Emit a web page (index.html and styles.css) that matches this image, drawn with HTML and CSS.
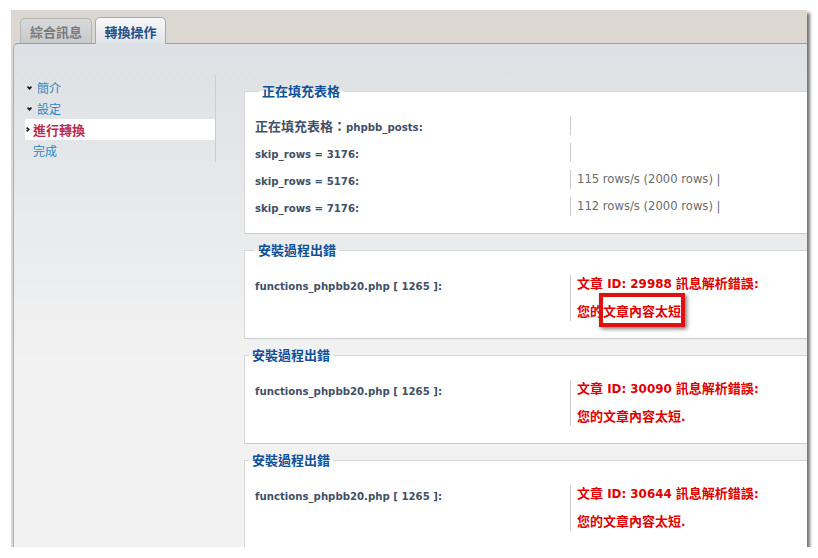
FILE: index.html
```html
<!DOCTYPE html>
<html lang="zh-Hant">

<head>
    <meta charset="UTF-8">
    <meta name="viewport" content="width=device-width, initial-scale=1.0">
    <title>轉換操作</title>
    <link rel="stylesheet" href="styles.css">
</head>

<body>
    <div class="window">
        <div class="tabs">
            <div class="tab">綜合訊息</div>
            <div class="tab tab_active">轉換操作</div>
        </div>

        <div class="panel">
            <!-- left menu -->
            <ul class="menu">
                <li><a href="#"><svg class="bullet" width="5" height="4" viewBox="0 0 5 4"><polyline points="0.6,0.6 2.5,2.8 4.4,0.6" /></svg>簡介</a></li>
                <li><a href="#"><svg class="bullet" width="5" height="4" viewBox="0 0 5 4"><polyline points="0.6,0.6 2.5,2.8 4.4,0.6" /></svg>設定</a></li>
                <li class="menu_active"><a href="#"><svg class="bullet" width="4" height="5" viewBox="0 0 4 5"><polyline points="0.6,0.6 2.8,2.5 0.6,4.4" /></svg>進行轉換</a></li>
                <li class="menu_plain"><a href="#">完成</a></li>
            </ul>

            <div class="main">
                <fieldset>
                    <legend class="legend_fill">正在填充表格</legend>
                    <dl>
                        <dt><span class="zh">正在填充表格：</span>phpbb_posts:</dt>
                        <dd></dd>
                    </dl>
                    <dl>
                        <dt>skip_rows = 3176:</dt>
                        <dd></dd>
                    </dl>
                    <dl>
                        <dt>skip_rows = 5176:</dt>
                        <dd>115 rows/s (2000 rows) |</dd>
                    </dl>
                    <dl>
                        <dt>skip_rows = 7176:</dt>
                        <dd>112 rows/s (2000 rows) |</dd>
                    </dl>
                </fieldset>

                <fieldset>
                    <legend>安裝過程出錯</legend>
                    <dl>
                        <dt>functions_phpbb20.php [ 1265 ]:</dt>
                        <dd class="error">
                            <span class="zh">文章</span> ID: 29988 <span class="zh">訊息解析錯誤</span>:<br><br><span class="zh">您的文章內容太短</span>.
                            <span class="highlight"></span>
                        </dd>
                    </dl>
                </fieldset>

                <fieldset>
                    <legend class="legend_left">安裝過程出錯</legend>
                    <dl>
                        <dt>functions_phpbb20.php [ 1265 ]:</dt>
                        <dd class="error"><span class="zh">文章</span> ID: 30090 <span class="zh">訊息解析錯誤</span>:<br><br><span class="zh">您的文章內容太短</span>.</dd>
                    </dl>
                </fieldset>

                <fieldset>
                    <legend class="legend_left">安裝過程出錯</legend>
                    <dl>
                        <dt>functions_phpbb20.php [ 1265 ]:</dt>
                        <dd class="error"><span class="zh">文章</span> ID: 30644 <span class="zh">訊息解析錯誤</span>:<br><br><span class="zh">您的文章內容太短</span>.</dd>
                    </dl>
                </fieldset>
            </div>
        </div>
    </div>
</body>

</html>
```

FILE: styles.css
```css
* {
    margin: 0;
    padding: 0;
}

body {
    background: #fff;
    font-family: "DejaVu Sans", "Noto Sans CJK TC", sans-serif;
}

.window {
    margin: 10px 0 0 11px;
    width: 796px;
    height: 537px;
    background: #dcd8d1;
    overflow: hidden;
    box-shadow: 3px 3px 3px rgba(0, 0, 0, 0.55);
    display: flex;
    flex-direction: column;
}

/* tabs */
.tabs {
    height: 33px;
    flex: none;
    display: flex;
    align-items: flex-end;
    gap: 3px;
    padding-left: 9px;
}

.tab {
    box-sizing: border-box;
    width: 72px;
    height: 25px;
    border: 1px solid #b4b4b4;
    border-bottom: none;
    border-radius: 5px 5px 0 0;
    background: linear-gradient(#d8d9db, #c9cacd);
    color: #7a7a7a;
    font: bold 13px "Noto Sans CJK TC", sans-serif;
    display: flex;
    align-items: center;
    justify-content: center;
}

.tab_active {
    width: 71px;
    height: 27px;
    margin-bottom: -1px;
    border-color: #a9a9a9;
    background: linear-gradient(#f7f8f9, #e0e3e7);
    color: #1f4f8b;
    position: relative;
    z-index: 1;
}

.panel {
    flex: 1;
    margin-left: 2px;
    border-top: 1px solid #9d9d9d;
    border-left: 1px solid #aeaeae;
    border-top-left-radius: 5px;
    background: linear-gradient(#dde0e4, #f2f2f2 320px);
    display: flex;
    align-items: flex-start;
}

/* menu */
.menu {
    flex: none;
    list-style: none;
    margin: 31px 0 0 11px;
    padding: 2px 0 1px;
    width: 190px;
    border-right: 1px solid #cdcdcd;
}

.menu a {
    display: flex;
    align-items: center;
    gap: 5px;
    height: 21px;
    padding-left: 2px;
    color: #2a86c2;
    text-decoration: none;
    font: 12px "Noto Sans CJK TC", sans-serif;
}

.bullet {
    fill: none;
    stroke: #1a1a1a;
    stroke-width: 1.6;
}

.menu_active a {
    background: #fff;
    color: #bc2a4d;
    font-weight: bold;
    font-size: 13px;
    gap: 3px;
    padding-left: 1px;
}

.menu_plain a {
    padding-left: 8px;
}

/* content */
.main {
    flex: none;
    width: 640px;
    margin-left: 28px;
    padding-top: 39px;
}

fieldset {
    margin: 0 0 8px;
    padding: 13px 10px;
    border: 1px solid #d7d7d7;
    border-right-color: #ccc;
    border-bottom-color: #ccc;
    background: #fff;
}

legend {
    padding: 0 3px;
    font: bold 13px/16px "Noto Sans CJK TC", sans-serif;
    color: #115098;
}

.legend_fill {
    margin-left: 4px;
}

.legend_left {
    margin-left: -6px;
}

dl {
    display: grid;
    grid-template-columns: 315px 1fr;
    padding: 4px 0;
}

dt {
    padding-top: 4px;
    line-height: 15px;
    color: #425067;
    font-family: "DejaVu Sans Condensed", "DejaVu Sans", "Noto Sans CJK TC", sans-serif;
    font-weight: bold;
    font-size: 11.3px;
}

dd {
    position: relative;
    padding: 2px 0 2px 6px;
    min-height: 14px;
    line-height: 14px;
    border-left: 1px solid #ccc;
    color: #6b6b6b;
    font-size: 11.6px;
}

.zh {
    font-family: "Noto Sans CJK TC", sans-serif;
    font-size: 13px;
    line-height: 0;
}

.error {
    color: #df0000;
    font-weight: bold;
    font-size: 11.9px;
}

.highlight {
    position: absolute;
    left: 28px;
    top: 18px;
    width: 78px;
    height: 26px;
    border: 4px solid #e01010;
    box-shadow: 2px 2px 4px rgba(0, 0, 0, 0.5);
}
```
